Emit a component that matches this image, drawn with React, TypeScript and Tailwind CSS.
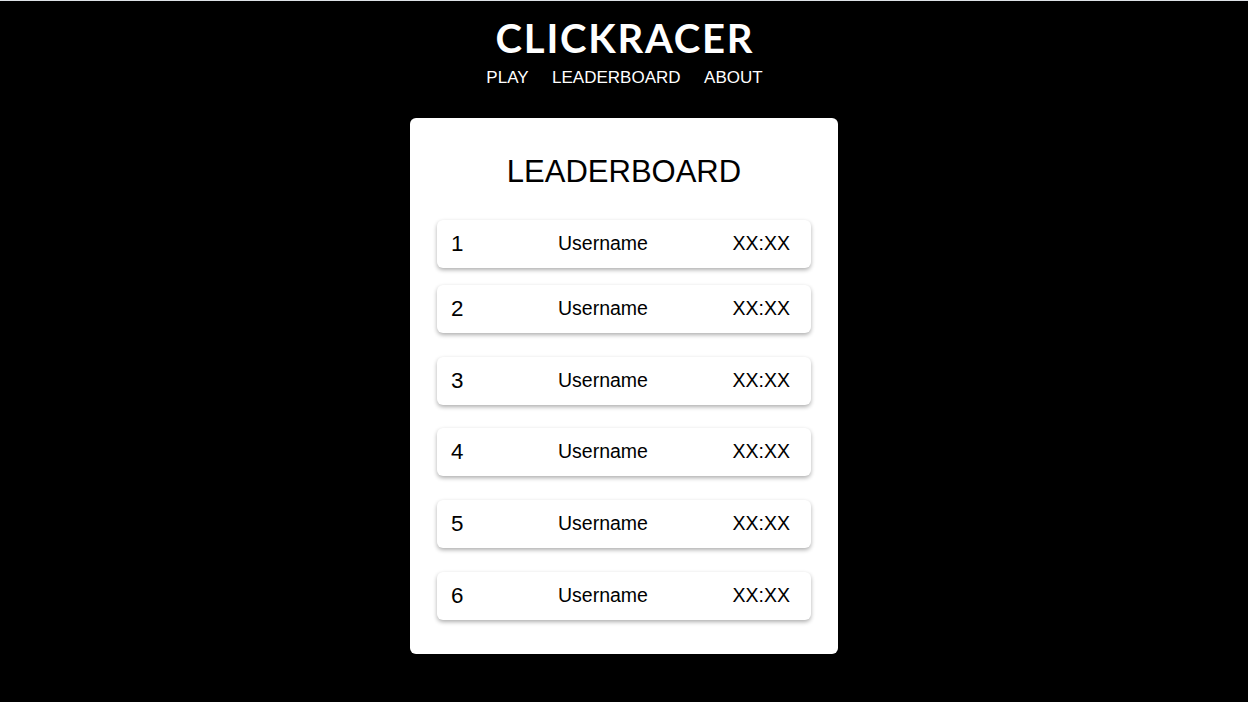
const rows = [1, 2, 3, 4, 5, 6];

// spacing between rows in the reference is uneven, keep it that way
const rowGap = ['', 'mt-[17px]', 'mt-6', 'mt-[23px]', 'mt-6', 'mt-6'];

const App = () => {
  return (
    <div
      className="min-h-[702px] w-full border-t border-[#dde1e6] bg-black"
      style={{ fontFamily: '"Liberation Sans", Arial, sans-serif' }}
    >
      <header className="flex flex-col items-center pt-[17px]">
        <h1 className="pl-[2px] font-['Lato',sans-serif] text-[40px] font-bold leading-none tracking-[1.8px] text-white">
          CLICKRACER
        </h1>
        <nav className="mt-[11px] flex gap-[23.5px] pl-[1px] text-[17px] leading-none text-white">
          <a href="#">PLAY</a>
          <a href="#">LEADERBOARD</a>
          <a href="#">ABOUT</a>
        </nav>
      </header>

      <main className="mt-8 flex justify-center">
        <section className="w-[428px] rounded-md bg-white px-[27px] pb-[34px] pt-[38px]">
          <h2 className="text-center text-[31px] leading-none text-black">LEADERBOARD</h2>
          <ul className="mt-[33px] flex flex-col">
            {rows.map((n, i) => (
              <li
                key={n}
                className={`flex h-12 items-center rounded-md bg-white pl-[14px] pr-[21px] text-black shadow-[0_2px_4px_rgba(0,0,0,0.32)] ${rowGap[i]}`}
              >
                <span className="w-[107px] text-[22.4px]">{n}</span>
                <span className="text-[19.5px]">Username</span>
                <span className="ml-auto text-[19.5px]">XX:XX</span>
              </li>
            ))}
          </ul>
        </section>
      </main>
    </div>
  );
};

export default App;
